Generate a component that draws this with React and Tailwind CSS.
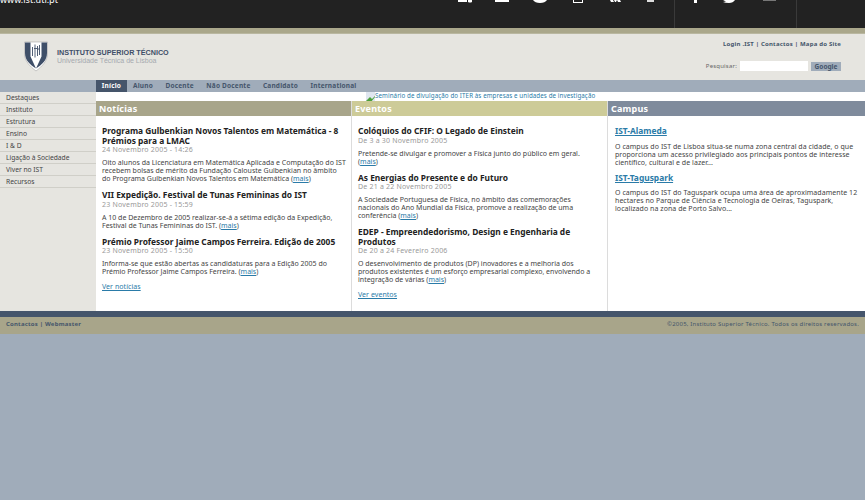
const font = { fontFamily: '"Noto Sans", "DejaVu Sans", sans-serif' };

function Mais() {
  return <a className="text-[#2a7ba8] underline">mais</a>;
}

function Item({ title, date, children }) {
  return (
    <div className="mb-[7px]">
      <h3 className="text-[8.4px] leading-[9.5px] font-bold text-[#222]">{title}</h3>
      <div className="text-[7px] leading-[8px] text-[#999] tracking-[0.2px] mt-[1px]">{date}</div>
      <p className="text-[7px] leading-[8px] text-[#444] mt-[5px]">{children}</p>
    </div>
  );
}

function Column({ title, color, width, pad, children }) {
  return (
    <section className={`${width} shrink-0 bg-white flex flex-col`}>
      <h2 className={`${color} h-[15px] text-white text-[9px] leading-[15px] font-bold pl-[3px] tracking-[0.2px]`}>{title}</h2>
      <div className={`${pad} pt-[10px] flex-1`}>{children}</div>
    </section>
  );
}

function TopIcons() {
  return (
    <div className="absolute top-0 left-[456px] w-[409px] h-[28px]">
      <svg className="absolute left-0 top-0" width="409" height="28" fill="none">
        <path d="M2 0h9v2H2zM12 0h4v2q-2 1-4 0z" fill="#fff" />
        <rect x="39" y="0" width="14" height="2" fill="#fff" />
        <path d="M77 0h14q-2 3-7 3t-7-3z" fill="#fff" />
        <path d="M117 0v3h10V0h-1v2h-8V0z" fill="#fff" />
        <path d="M154 0h3l1 2h-3zM161 0h3l1 2h-3zM158 0h3l-1 2h-1z" fill="#fff" />
        <rect x="191" y="0" width="7" height="2" fill="#ddd" />
        <rect x="238" y="0" width="3" height="3" fill="#fff" />
        <path d="M267 0h12q-2 3-6 3-4 0-6-1l3-.5z" fill="#fff" />
        <rect x="307" y="0" width="13" height="1" fill="#777" />
        <rect x="218" y="0" width="1" height="28" fill="#3a3a3a" />
        <rect x="340" y="0" width="1" height="28" fill="#3a3a3a" />
      </svg>
      <span className="absolute left-[359px] top-[-9px] text-[10px] leading-[11px] text-[#666]">EN</span>
    </div>
  );
}

function Logo() {
  return (
    <svg width="24" height="31" viewBox="0 0 24 31" className="shrink-0">
      <path d="M0.5 1h23v11c0 8-5 13-11.5 18C5.500 25 .5 20 .5 12z" fill="#fff" stroke="#999" strokeWidth=".5" />
      <path d="M1 1.500h5.500v14l5.500 12c-6-4-11-8-11-15.500z" fill="#3f4f68" />
      <path d="M23 1.500h-5.500v14l-5.500 12c6-4 11-8 11-15.500z" fill="#3f4f68" />
      <path d="M8.500 6v9M11 3.500v13M13.500 5v10M15.500 4v10M10 7.500h3M13 8h3" stroke="#3f4f68" strokeWidth=".9" fill="none" />
    </svg>
  );
}

export default function App() {
  const nav = ["Aluno", "Docente", "Não Docente", "Candidato", "International"];
  const side = ["Destaques", "Instituto", "Estrutura", "Ensino", "I & D", "Ligação à Sociedade", "Viver no IST", "Recursos"];
  return (
    <div style={font} className="relative min-h-[500px] bg-[#a0acba] overflow-hidden">
      <div className="h-[28px] bg-[#222222] overflow-hidden">
        <div className="text-[9px] leading-[11px] text-white mt-[-6px]">www.ist.utl.pt</div>
      </div>
      <TopIcons />
      <div className="h-[6px] bg-[#aaa78b] border-b-[1px] border-[#b9b7a0]" />

      <header className="h-[46px] bg-[#e6e5e0] flex justify-between">
        <div className="flex items-start pl-[24px] pt-[7px]">
          <Logo />
          <div className="ml-[9px] mt-[8px]">
            <div className="text-[7.2px] leading-[8px] text-[#3f4f68] font-['Liberation_Sans'] font-bold whitespace-nowrap">INSTITUTO SUPERIOR TÉCNICO</div>
            <div className="text-[7px] leading-[7px] text-[#a5a9af] font-['Liberation_Sans'] whitespace-nowrap">Universidade Técnica de Lisboa</div>
          </div>
        </div>
        <div className="pr-[24px] flex flex-col items-end pt-[6px]">
          <div className="text-[6px] leading-[8px] font-bold text-[#45556b] tracking-[0.2px]">Login .IST | Contactos | Mapa do Site</div>
          <div className="flex items-center mt-[13px]">
            <span className="text-[6px] text-[#666] mr-[3px] tracking-[0.2px]">Pesquisar:</span>
            <input className="w-[68px] h-[10px] bg-white" />
            <span className="w-[30px] h-[9px] ml-[3px] bg-[#a0acba] text-[6.500px] leading-[9px] font-bold text-[#45556b] text-center">Google</span>
          </div>
        </div>
      </header>

      <nav className="h-[12px] bg-[#a0acba] pl-[96px] flex">
        <a className="w-[31px] bg-[#45556b] text-white text-[6.500px] leading-[12px] font-bold text-center tracking-[0.2px]">Início</a>
        <div className="flex gap-[12.500px] pl-[6px]">
          {nav.map((n) => (
            <a key={n} className="text-[6.500px] leading-[12px] font-bold text-[#45556b] tracking-[0.2px]">{n}</a>
          ))}
        </div>
      </nav>

      <div className="flex h-[219px]">
        <aside className="w-[96px] shrink-0 bg-[#e6e5e0]">
          {side.map((s) => (
            <div key={s} className="h-[12px] border-b border-[#d0cfc8] pl-[6px] text-[6.700px] leading-[12px] text-[#444]">{s}</div>
          ))}
        </aside>
        <main className="flex-1 bg-[#dcdcdc] flex flex-col">
          <div className="h-[9px] bg-white flex pl-[270px]">
            <svg width="9" height="10" className="shrink-0" viewBox="0 0 9 10">
              <rect width="9" height="9" fill="#dfe6f0" />
              <path d="M0 9l4-4 2 2 3-3v1L5 10H0z" fill="#4aa03a" />
            </svg>
            <span className="text-[6.200px] leading-[8px] text-[#2a7ba8] whitespace-nowrap tracking-[0.1px]">Seminário de divulgação do ITER às empresas e unidades de investigação</span>
          </div>
          <div className="flex gap-[1px] flex-1 min-h-0">
            <Column title="Notícias" color="bg-[#a8a58a]" width="w-[255px]" pad="pl-[6px]">
              <Item title="Programa Gulbenkian Novos Talentos em Matemática - 8 Prémios para a LMAC" date="24 Novembro 2005 - 14:26">
                Oito alunos da Licenciatura em Matemática Aplicada e Computação do IST recebem bolsas de mérito da Fundação Calouste Gulbenkian no âmbito do{"\u00a0"}Programa Gulbenkian Novos Talentos em Matemática (<Mais />)
              </Item>
              <Item title="VII Expedição. Festival de Tunas Femininas do IST" date="23 Novembro 2005 - 15:59">
                A 10 de Dezembro de 2005 realizar-se-á a sétima edição da Expedição, Festival de Tunas Femininas do IST. (<Mais />)
              </Item>
              <Item title="Prémio Professor Jaime Campos Ferreira. Edição de 2005" date="23 Novembro 2005 - 15:50">
                Informa-se que estão abertas as candidaturas para a Edição 2005 do Prémio Professor Jaime Campos Ferreira. (<Mais />)
              </Item>
              <a className="block mt-[1px] text-[7px] leading-[8px] text-[#2a7ba8] underline tracking-[0.05px]">Ver notícias</a>
            </Column>
            <Column title="Eventos" color="bg-[#cdcb98]" width="w-[255px]" pad="px-[6px]">
              <Item title="Colóquios do CFIF: O Legado de Einstein" date="De 3 a 30 Novembro 2005">
                Pretende-se divulgar e promover a Física junto do público em geral.<br />(<Mais />)
              </Item>
              <Item title="As Energias do Presente e do Futuro" date="De 21 a 22 Novembro 2005">
                A Sociedade Portuguesa de Física, no âmbito das comemorações nacionais do Ano Mundial da Física, promove a realização de uma conferência (<Mais />)
              </Item>
              <Item title="EDEP - Empreendedorismo, Design e Engenharia de Produtos" date="De 20 a 24 Fevereiro 2006">
                O desenvolvimento de produtos (DP) inovadores e a melhoria dos produtos existentes é um esforço empresarial complexo, envolvendo a integração de várias (<Mais />)
              </Item>
              <a className="block mt-[1px] text-[7px] leading-[8px] text-[#2a7ba8] underline tracking-[0.05px]">Ver eventos</a>
            </Column>
            <Column title="Campus" color="bg-[#7f8b9c]" width="flex-1" pad="pl-[7px] pr-[6px]">
              <h3 className="text-[8.400px] leading-[9.500px] font-bold text-[#2a7ba8] underline">IST-Alameda</h3>
              <p className="text-[7px] leading-[8px] text-[#444] mt-[7px] mb-[6px] tracking-[0.05px]">O campus do IST de Lisboa situa-se numa zona central da cidade, o que proporciona um acesso privilegiado aos principais pontos de interesse científico, cultural e de lazer...</p>
              <h3 className="text-[8.400px] leading-[9.500px] font-bold text-[#2a7ba8] underline">IST-Taguspark</h3>
              <p className="text-[7px] leading-[8px] text-[#444] mt-[7px] tracking-[0.05px]">O campus do IST do Taguspark ocupa uma área de aproximadamente 12 hectares no Parque de Ciência e Tecnologia de Oeiras, Taguspark, localizado na zona de Porto Salvo...</p>
            </Column>
          </div>
        </main>
      </div>

      <div className="h-[6px] bg-[#45556b]" />
      <footer className="h-[17px] bg-[#a8a58a] flex justify-between px-[6px] text-[6px] leading-[14px] font-bold text-[#45556b] tracking-[0.2px]">
        <span>Contactos | Webmaster</span>
        <span className="font-normal">©2005, Instituto Superior Técnico. Todos os direitos reservados.</span>
      </footer>
    </div>
  );
}
